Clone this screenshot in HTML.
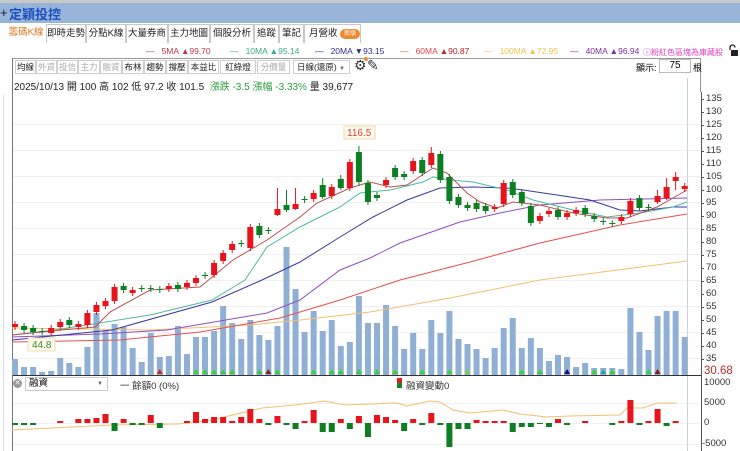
<!DOCTYPE html>
<html><head><meta charset="utf-8"><style>
*{margin:0;padding:0;box-sizing:border-box}
body{width:740px;height:451px;overflow:hidden;background:#fff;font-family:"Liberation Sans","Noto Sans CJK TC",sans-serif;position:relative}
.a{position:absolute;white-space:nowrap}
.tab{position:absolute;top:24px;height:19px;border:1px solid #c8c8c8;border-bottom:none;font-size:9.5px;line-height:17px;text-align:center;color:#222;background:#fff;white-space:nowrap;overflow:hidden}
.tb{position:absolute;top:60px;height:14px;border:1px solid #d0d0d0;font-size:8.5px;line-height:12px;text-align:center;color:#222;white-space:nowrap;overflow:hidden}
.tb.g{color:#aaa}
.lg{position:absolute;top:46px;font-size:8.5px;white-space:nowrap}
.ax{position:absolute;left:706px;font-size:9.5px;color:#333;line-height:10px}
</style></head><body>
<div class="a" style="left:0;top:0;width:740px;height:3px;background:#c9c9c9"></div>
<div class="a" style="left:0;top:3px;width:740px;height:20px;background:#98b4d8"></div>
<div class="a" style="left:0;top:5px;font-size:13px;color:#123">+</div>
<div class="a" style="left:9px;top:4px;font-size:13px;font-weight:bold;color:#1a4fc0">定穎投控</div>

<div class="tab" style="left:7px;width:38px;border:none;color:#e07a20">籌碼K線</div>
<div class="tab" style="left:46px;width:40px">即時走勢</div>
<div class="tab" style="left:86px;width:40px">分點K線</div>
<div class="tab" style="left:126px;width:42px">大量券商</div>
<div class="tab" style="left:168px;width:42px">主力地圖</div>
<div class="tab" style="left:210px;width:44px">個股分析</div>
<div class="tab" style="left:254px;width:25px">追蹤</div>
<div class="tab" style="left:279px;width:25px">筆記</div>
<div class="tab" style="left:304px;width:57px;text-align:left;padding-left:4px">月營收 <span style="display:inline-block;background:#f08a30;color:#fff;border-radius:6px;font-size:6px;line-height:10px;padding:0 4px;vertical-align:1px">新版</span></div>

<div class="lg" style="left:146px;color:#c03848">—&nbsp;&nbsp;&nbsp;5MA ▲99.70</div>
<div class="lg" style="left:230px;color:#3aa888">—&nbsp;&nbsp;&nbsp;10MA ▲95.14</div>
<div class="lg" style="left:315px;color:#303090">—&nbsp;&nbsp;&nbsp;20MA ▼93.15</div>
<div class="lg" style="left:400px;color:#e04848">—&nbsp;&nbsp;&nbsp;60MA <span style="color:#c02020">▲90.87</span></div>
<div class="lg" style="left:484px;color:#f0c050">—&nbsp;&nbsp;&nbsp;100MA ▲72.95</div>
<div class="lg" style="left:570px;color:#8030a0">—&nbsp;&nbsp;&nbsp;40MA ▲96.94</div>
<div class="lg" style="left:643px;color:#e040c0;font-size:8px;top:47px">ⓘ粉紅色區塊為庫藏股</div>
<svg class="a" style="left:727px;top:44px" width="11" height="12"><path d="M3 6V3.5a2.5 2.5 0 0 1 5 0" fill="none" stroke="#222" stroke-width="1.3"/><rect x="4" y="6" width="7" height="6" fill="#222"/></svg>

<div class="a" style="left:12px;top:58px;width:689px;height:393px;border-left:1px solid #777;border-top:1px solid #999"></div>
<div class="a" style="left:700px;top:58px;width:1px;height:34px;background:#999"></div>
<div class="a" style="left:3px;top:95px;width:1px;height:356px;background:#ddd"></div>

<div class="tb" style="left:15px;width:21px">均線</div><div class="tb g" style="left:36px;width:21px">外資</div><div class="tb g" style="left:57px;width:21px">投信</div><div class="tb g" style="left:78px;width:22px">主力</div><div class="tb g" style="left:100px;width:22px">融資</div><div class="tb" style="left:122px;width:22px">布林</div><div class="tb" style="left:144px;width:22px">趨勢</div><div class="tb" style="left:166px;width:22px">撐壓</div><div class="tb" style="left:188px;width:31px">本益比</div><div class="tb" style="left:220px;width:36px">紅綠燈</div><div class="tb g" style="left:257px;width:33px">分價量</div>
<div class="tb" style="left:293px;width:57px;text-align:left;padding-left:3px">日線(還原) <span style="font-size:6px;color:#666">▼</span></div>
<div class="a" style="left:354px;top:57px;font-size:14px;color:#333">⚙</div>
<div class="a" style="left:367px;top:57px;font-size:14px;color:#333">✎</div>
<div class="a" style="left:364px;top:57px;width:4px;height:4px;background:#f08a30;border-radius:2px"></div>
<div class="a" style="left:636px;top:61px;font-size:9px">顯示:</div>
<div class="a" style="left:659px;top:59px;width:32px;height:14px;border:1px solid #bbb;font-size:10px;text-align:center;line-height:12px">75</div>
<div class="a" style="left:693px;top:61px;font-size:9px">根</div>

<div class="a" style="left:14px;top:78px;font-size:10px;color:#222">2025/10/13 開 100 高 102 低 97.2 收 101.5 &nbsp;<span style="color:#2aa040">漲跌 -3.5 漲幅 -3.33%</span> 量 39,677</div>

<svg class="a" style="left:0;top:0" width="740" height="451" id="s">
<g stroke="#f0f0f0" stroke-width="1">
<line x1="13" y1="124.5" x2="700" y2="124.5"/><line x1="13" y1="150.5" x2="700" y2="150.5"/><line x1="13" y1="176.5" x2="700" y2="176.5"/><line x1="13" y1="202.5" x2="700" y2="202.5"/><line x1="13" y1="228.5" x2="700" y2="228.5"/><line x1="13" y1="254.5" x2="700" y2="254.5"/><line x1="13" y1="280.5" x2="700" y2="280.5"/><line x1="13" y1="306.5" x2="700" y2="306.5"/><line x1="13" y1="332.5" x2="700" y2="332.5"/><line x1="13" y1="358.5" x2="700" y2="358.5"/>
<line x1="13" y1="403.5" x2="700" y2="403.5"/><line x1="13" y1="423.5" x2="700" y2="423.5"/><line x1="13" y1="444.5" x2="700" y2="444.5"/>
</g>
<line x1="687.5" y1="78" x2="687.5" y2="451" stroke="#c8d4e4"/>
<line x1="701.5" y1="92" x2="701.5" y2="451" stroke="#555"/>
<line x1="13" y1="375.5" x2="701" y2="375.5" stroke="#333"/>
<g id="vol" fill="#8fb0d4"></g>
<g id="mk"></g>
<g fill="none" stroke-width="1">
<polyline stroke="#f2c070" points="12,328 150,330 250,325 300,320 370,312 450,298 540,280 687,261"/>
<polyline stroke="#e85050" points="12,342 120,340 200,332 280,318 340,300 400,280 470,262 540,243 620,225 687,214"/>
<polyline stroke="#9050c0" points="12,337 100,334 167,330 267,313 300,300 340,270 370,258 400,243 460,222 500,213 540,205 600,200 687,198"/>
<polyline stroke="#3838a0" points="12,340 112,330 212,302 262,280 300,262 340,237 373,217 407,200 440,188 473,187 507,188 523,190 557,195 590,200 620,210 640,211 673,207 687,207"/>
<polyline stroke="#50b8a0" points="12,335 55,330 150,315 212,300 245,280 267,247 300,227 340,207 360,193 390,190 423,182 433,177 450,180 473,182 507,190 533,200 573,210 607,217 640,213 673,207 687,202"/>
<polyline stroke="#b85050" points="12,335 62,330 95,327 110,312 150,290 200,287 233,260 267,240 300,217 317,203 350,188 370,182 390,187 407,185 433,168 447,173 467,193 480,202 497,208 513,202 540,205 573,213 607,218 627,218 657,207 687,190"/>
<polyline stroke="#f2c070" points="12,430 112,425 178,424 212,420 262,408 295,405 325,401 345,405 372,404 390,403 397,403 407,406 430,401 440,402 453,410 470,413 503,410 520,414 547,417 570,416 620,415 627,408 643,408 657,403 677,403"/>
</g>
<g id="cd"></g>
<g id="fb"></g>
<rect x="344" y="126" width="31" height="13" fill="#fffbe8" stroke="#e8d8b0"/>
<text x="347" y="136" font-size="10" fill="#e04040" font-family="Liberation Sans">116.5</text>
<rect x="28" y="338" width="27" height="13" fill="#fffbe8" stroke="#e8e0b8"/>
<text x="32" y="348" font-size="10" fill="#3a8a3a" font-family="Liberation Sans">44.8</text>
</svg>

<div id="axl"></div>
<div class="a" style="left:704px;top:365px;font-size:11.5px;color:#b03030">30.68</div>
<div class="ax" style="top:378px;left:704px">10000</div>
<div class="ax" style="top:398px;left:704px">5000</div>
<div class="ax" style="top:418px;left:704px">0</div>
<div class="ax" style="top:439px;left:702px">-5000</div>

<div class="a" style="left:13px;top:379px;width:9px;height:9px;border-radius:5px;background:#999;color:#fff;font-size:7px;line-height:9px;text-align:center">✕</div>
<div class="a" style="left:25px;top:377px;width:83px;height:14px;border:1px solid #ccc;font-size:9.5px;line-height:12px;padding-left:3px">融資<span style="position:absolute;right:4px;font-size:6px;color:#666">▼</span></div>
<div class="a" style="left:120px;top:378px;font-size:9.5px;color:#333">一 餘額0 (0%)</div>
<div class="a" style="left:397px;top:378px;width:5px;height:5px;background:#e02020"></div>
<div class="a" style="left:397px;top:383px;width:5px;height:5px;background:#118822"></div>
<div class="a" style="left:406px;top:378px;font-size:9.5px;color:#333">融資變動0</div>

<script>
var NS="http://www.w3.org/2000/svg";
function X(i){return 15+i*9.05}
function el(p,t,a){var e=document.createElementNS(NS,t);for(var k in a)e.setAttribute(k,a[k]);document.getElementById(p).appendChild(e);return e}
var C=[[324,327,'r'],[326,330,'g'],[328,332,'g'],[331,332,'d'],[328,333,'r'],[322,327,'r'],[320,325,'g'],[324,327,'r'],[313,325,'r'],[305,312,'r'],[301,306,'r'],[287,301,'r'],[286,290,'g'],[290,293,'r'],[288,289,'d'],[288,289,'d'],[289,290,'d'],[286,289,'r'],[285,289,'g'],[283,287,'r'],[278,283,'r'],[275,276,'d'],[263,275,'r'],[253,261,'r'],[244,250,'r'],[243,244,'d'],[227,248,'r'],[226,235,'g'],[230,231,'d'],[209,215,'r'],[205,210,'g'],[204,209,'r'],[199,200,'d'],[193,199,'r'],[185,197,'g'],[187,196,'r'],[179,188,'g'],[162,188,'r'],[152,182,'g'],[183,202,'g'],[195,198,'g'],[180,185,'r'],[168,177,'g'],[174,177,'g'],[161,171,'r'],[160,173,'g'],[153,165,'r'],[154,180,'g'],[177,201,'g'],[197,205,'g'],[205,208,'g'],[203,209,'g'],[206,211,'g'],[207,209,'r'],[183,204,'r'],[182,195,'g'],[192,203,'g'],[206,223,'g'],[216,221,'r'],[211,214,'r'],[210,217,'g'],[213,217,'r'],[210,213,'r'],[208,214,'g'],[216,219,'g'],[221,222,'d'],[223,224,'d'],[217,221,'r'],[201,214,'r'],[198,208,'g'],[207,208,'d'],[196,202,'r'],[187,198,'r'],[177,181,'r'],[186,189,'r']];
var HW={29:[188,216],30:[190,212],31:[188,210],38:[146,186],46:[147,168],36:[175,190],72:[178,200],73:[172,190],71:[190,204],34:[178,199]};
C.forEach(function(c,i){var x=X(i),col=c[2]=='r'?'#e8141b':'#0d7f22';
var h=HW[i]||[c[0]-3,c[1]+3];
el('cd','line',{x1:x,x2:x,y1:h[0],y2:h[1],stroke:col});
if(c[2]=='d')el('cd','line',{x1:x-3,x2:x+3,y1:c[0]+.5,y2:c[0]+.5,stroke:col});
else el('cd','rect',{x:x-3,y:c[0],width:6,height:Math.max(1,c[1]-c[0]),fill:col});});
var V=[359,367,367,372,371,358,363,367,347,313,331,324,327,348,362,333,357,356,326,354,337,337,331,306,323,339,320,335,340,326,247,289,332,311,331,320,346,342,296,323,323,305,326,349,333,349,320,333,311,339,344,349,358,348,328,318,348,338,348,361,355,357,367,363,368,368,368,369,308,332,350,316,311,311,337];
V.forEach(function(v,i){el('vol','rect',{x:X(i)-3,y:v,width:6,height:375-v})});
[20,21,22,23,24,27,29,33,35,36,38,40,42,45,48,50,56,58,64,66,70].forEach(function(i){el('mk','path',{d:'M'+(X(i)-3)+' 374L'+X(i)+' 369L'+(X(i)+3)+' 374Z',fill:'#3ad03a'})});
[[16,'#c03030'],[28,'#802020'],[61,'#101080'],[50,'#80d040'],[65,'#30a0a0'],[71,'#802020']].forEach(function(m){var x=X(m[0]);el('mk','path',{d:'M'+(x-3)+' 374L'+x+' 369L'+(x+3)+' 374Z',fill:m[1]})});
var F={0:[423,425,'g'],1:[423,425,'g'],2:[423,425,'g'],5:[421,423,'r'],7:[419,423,'r'],8:[419,423,'r'],9:[418,423,'r'],10:[414,423,'r'],11:[423,431,'g'],12:[419,423,'r'],13:[423,425,'g'],14:[423,425,'g'],15:[415,423,'r'],16:[423,428,'g'],19:[421,423,'r'],20:[412,423,'r'],21:[419,423,'r'],22:[417,423,'r'],23:[417,423,'r'],24:[421,423,'r'],25:[417,423,'r'],26:[409,423,'r'],27:[419,423,'r'],28:[423,425,'g'],29:[416,423,'r'],30:[423,425,'g'],31:[423,429,'g'],32:[421,423,'r'],33:[410,423,'r'],34:[423,432,'g'],35:[423,432,'g'],36:[419,423,'r'],37:[423,429,'g'],38:[416,423,'r'],39:[423,437,'g'],40:[415,423,'r'],41:[417,423,'r'],42:[420,423,'r'],43:[423,431,'g'],44:[419,423,'r'],45:[423,425,'g'],46:[413,423,'r'],47:[423,425,'g'],48:[423,447,'g'],49:[423,429,'g'],50:[423,429,'g'],51:[420,423,'r'],52:[421,423,'r'],53:[421,423,'r'],54:[421,423,'r'],55:[423,432,'g'],56:[423,427,'g'],57:[423,427,'g'],58:[423,424,'g'],59:[423,427,'g'],60:[419,423,'r'],61:[423,425,'g'],63:[421,423,'r'],66:[423,425,'g'],67:[421,423,'r'],68:[400,423,'r'],69:[423,425,'g'],70:[421,423,'r'],71:[409,423,'r'],72:[423,426,'g'],73:[421,423,'r']};
for(var k in F){var f=F[k];el('fb','rect',{x:X(+k)-3,y:f[0],width:6,height:f[1]-f[0],fill:f[2]=='r'?'#e8141b':'#0d7f22'})}
var d=document.getElementById('axl');
for(var p=135;p>=35;p-=5){var y=112+(130-p)*2.6;var t=document.createElement('div');t.className='ax';t.style.top=(y-5)+'px';t.textContent=p;d.appendChild(t);var l=document.createElement('div');l.className='a';l.style.cssText='left:701px;width:3px;height:1px;background:#555;top:'+y+'px';d.appendChild(l)}
</script>
</body></html>
